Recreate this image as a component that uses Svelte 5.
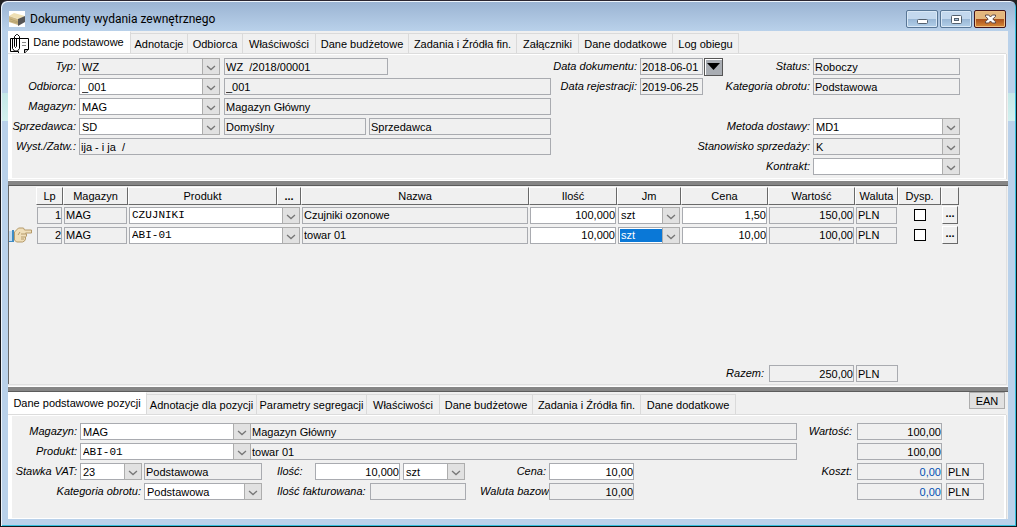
<script lang="ts">
	const mainTabs = [
		{ name: 'Dane podstawowe', width: 123 },
		{ name: 'Adnotacje', width: 57 },
		{ name: 'Odbiorca', width: 55 },
		{ name: 'Właściwości', width: 73 },
		{ name: 'Dane budżetowe', width: 93 },
		{ name: 'Zadania i Źródła fin.', width: 108 },
		{ name: 'Załączniki', width: 62 },
		{ name: 'Dane dodatkowe', width: 94 },
		{ name: 'Log obiegu', width: 66 },
	];

	const itemTabs = [
		{ name: 'Dane podstawowe pozycji', width: 139 },
		{ name: 'Adnotacje dla pozycji', width: 110 },
		{ name: 'Parametry segregacji', width: 110 },
		{ name: 'Właściwości', width: 73 },
		{ name: 'Dane budżetowe', width: 93 },
		{ name: 'Zadania i Źródła fin.', width: 108 },
		{ name: 'Dane dodatkowe', width: 95 },
	];

	const items = [
		{ lp: 1, store: 'MAG', product: 'CZUJNIKI', name: 'Czujniki ozonowe', qty: '100,000', unit: 'szt', price: '1,50', value: '150,00', currency: 'PLN' },
		{ lp: 2, store: 'MAG', product: 'ABI-01', name: 'towar 01', qty: '10,000', unit: 'szt', price: '10,00', value: '100,00', currency: 'PLN' },
	];

	let mainTab = $state(0);
	let itemTab = $state(0);
	let current = $state(1);
</script>

{#snippet combo(id, value, cls = '', label = undefined)}
	<span class="combo {cls}">
		<select {id} aria-label={label}><option>{value}</option></select>
		<svg class="arrow" viewBox="0 0 17 17" aria-hidden="true"><path d="M4 8l4.500 4 4.500-4" /></svg>
	</span>
{/snippet}

{#snippet ro(id, value, cls = '', label = undefined)}
	<input class="field ro {cls}" {id} {value} aria-label={label} readonly />
{/snippet}

<div class="window">
	<header class="titlebar">
		<svg class="app-icon" viewBox="0 0 16 16" aria-hidden="true">
			<rect width="16" height="16" fill="#fff" />
			<path d="M0 5l5-3 11 3-6 3z" fill="#eedfb4" />
			<path d="M0 5l9 3v6l-9-3z" fill="#cdb886" />
			<path d="M9 8l7-3v6l-7 4z" fill="#555" />
			<path d="M1 8l8 3M1 10l8 2" stroke="#ae9967" stroke-width=".7" fill="none" />
		</svg>
		<h1>Dokumenty wydania zewnętrznego</h1>
		<div class="controls">
			<button aria-label="Minimalizuj">
				<svg viewBox="0 0 28 14"><rect x="9.500" y="7.500" width="10" height="4" rx="1" fill="#fff" stroke="#53606e" /></svg>
			</button>
			<button aria-label="Maksymalizuj">
				<svg viewBox="0 0 28 14"><rect x="9.500" y="3.500" width="10" height="8" rx="1" fill="#fff" stroke="#53606e" /><rect x="12.500" y="6.500" width="4" height="2" fill="#a9c2dc" stroke="#53606e" /></svg>
			</button>
			<button class="close" aria-label="Zamknij">
				<svg viewBox="0 0 28 14"><path d="M9.500 3h3.200l1.800 2 1.800-2h3.200v1.500L16.800 7l2.700 2.700V11h-3.200l-1.800-2-1.800 2H9.500V9.700L12.200 7 9.500 4.500z" fill="#fff" stroke="#5c4848" /></svg>
			</button>
		</div>
	</header>

	<main>
		<div class="tabs" role="tablist">
			{#each mainTabs as tab, i}
				<button role="tab" class="tab" class:active={mainTab === i} aria-selected={mainTab === i} style="width: {tab.width}px" onclick={() => mainTab = i}>
					{#if i === 0}
						<svg class="clip" viewBox="0 0 22 22" aria-hidden="true">
							<path d="M1.500 5.500h18v11l-4 4h-6v-2h-8z" fill="#fff" stroke="#000" />
							<path d="M19.500 16.500h-4v4" fill="#bbb" stroke="#000" />
							<path d="M13 9.500h4M13 12.500h4" fill="none" stroke="#888" />
							<path d="M7.500 6v7.500l-1 1-1-1v-10l2-2h1l2 2v12l-2 2.500h-3l-2-2.500V6" fill="none" stroke="#000" />
						</svg>
					{/if}
					<span>{tab.name}</span>
				</button>
			{/each}
		</div>

		<section class="pane document">
			<div class="col grow">
				<div class="row">
					<label class="l-main" for="typ">Typ:</label>
					{@render combo('typ', 'WZ', 'w-combo ro')}
					{@render ro('numer', 'WZ  /2018/00001', 'w-number', 'Numer')}
				</div>
				<div class="row">
					<label class="l-main" for="odbiorca">Odbiorca:</label>
					{@render combo('odbiorca', '_001', 'w-combo')}
					{@render ro('odbiorca-nazwa', '_001', 'grow', 'Nazwa odbiorcy')}
				</div>
				<div class="row">
					<label class="l-main" for="magazyn">Magazyn:</label>
					{@render combo('magazyn', 'MAG', 'w-combo')}
					{@render ro('magazyn-nazwa', 'Magazyn Główny', 'grow', 'Nazwa magazynu')}
				</div>
				<div class="row">
					<label class="l-main" for="sprzedawca">Sprzedawca:</label>
					{@render combo('sprzedawca', 'SD', 'w-combo')}
					{@render ro('sprzedawca-imie', 'Domyślny', 'w-first', 'Imię')}
					{@render ro('sprzedawca-nazwisko', 'Sprzedawca', 'grow', 'Nazwisko')}
				</div>
				<div class="row">
					<label class="l-main" for="wyst">Wyst./Zatw.:</label>
					{@render ro('wyst', 'ija - i ja  /', 'grow')}
				</div>
			</div>

			<div class="col dates">
				<div class="row">
					<label class="grow" for="data-dok">Data dokumentu:</label>
					{@render ro('data-dok', '2018-06-01', 'w-date')}
					<button class="calendar" aria-label="Wybierz datę"><svg viewBox="0 0 17 16"><path d="M2 4h13l-6.500 7z" /></svg></button>
				</div>
				<div class="row">
					<label class="grow" for="data-rej">Data rejestracji:</label>
					{@render ro('data-rej', '2019-06-25', 'w-date')}
					<span class="calendar-gap"></span>
				</div>
			</div>

			<div class="col state">
				<div class="row">
					<label class="grow" for="status">Status:</label>
					{@render ro('status', 'Roboczy', 'w-state')}
				</div>
				<div class="row">
					<label class="grow" for="kategoria">Kategoria obrotu:</label>
					{@render ro('kategoria', 'Podstawowa', 'w-state')}
				</div>
				<div class="row spaced">
					<label class="grow" for="metoda">Metoda dostawy:</label>
					{@render combo('metoda', 'MD1', 'w-state')}
				</div>
				<div class="row">
					<label class="grow" for="stanowisko">Stanowisko sprzedaży:</label>
					{@render combo('stanowisko', 'K', 'w-state ro')}
				</div>
				<div class="row">
					<label class="grow" for="kontrakt">Kontrakt:</label>
					{@render combo('kontrakt', '', 'w-state')}
				</div>
			</div>
		</section>

		<div class="splitter"></div>

		<section class="items">
			<table>
				<colgroup>
					<col style="width: 28px" />
					<col style="width: 27px" />
					<col style="width: 65px" />
					<col style="width: 149px" />
					<col style="width: 24px" />
					<col />
					<col style="width: 88px" />
					<col style="width: 64px" />
					<col style="width: 87px" />
					<col style="width: 87px" />
					<col style="width: 43px" />
					<col style="width: 43px" />
					<col style="width: 18px" />
				</colgroup>
				<thead>
					<tr>
						<td></td>
						<th>Lp</th>
						<th>Magazyn</th>
						<th>Produkt</th>
						<th><b>...</b></th>
						<th>Nazwa</th>
						<th>Ilość</th>
						<th>Jm</th>
						<th>Cena</th>
						<th>Wartość</th>
						<th>Waluta</th>
						<th>Dysp.</th>
						<th aria-label="Szczegóły"></th>
					</tr>
				</thead>
				<tbody>
					{#each items as item, i}
						<tr onfocusin={() => current = i}>
							<td class="marker">
								{#if current === i}
									<svg viewBox="0 0 24 18" aria-label="Bieżąca pozycja">
										<path d="M0 5h3v10H0z" fill="#c4dcf0" />
										<path d="M3 4h2v12H0v-1h3z" fill="#3f8cc4" />
										<path d="M5.500 6l4-4h5l1 2h7v3h-6l1 1v2l-1 1v2l-1 2-2 1h-6l-2-2z" fill="#f0dfba" stroke="#b59a6a" />
										<path d="M11 6l-2 3M12 8h5M12 11h4M12 13h3" fill="none" stroke="#b59a6a" />
									</svg>
								{/if}
							</td>
							<td>{@render ro(undefined, item.lp, 'num', 'Lp')}</td>
							<td>{@render ro(undefined, item.store, '', 'Magazyn')}</td>
							<td colspan="2">{@render combo(undefined, item.product, 'mono', 'Produkt')}</td>
							<td>{@render ro(undefined, item.name, '', 'Nazwa')}</td>
							<td><input class="field num" value={item.qty} aria-label="Ilość" /></td>
							<td>{@render combo(undefined, item.unit, current === i ? 'selected' : '', 'Jm')}</td>
							<td><input class="field num" value={item.price} aria-label="Cena" /></td>
							<td>{@render ro(undefined, item.value, 'num', 'Wartość')}</td>
							<td>{@render ro(undefined, item.currency, '', 'Waluta')}</td>
							<td class="center"><input type="checkbox" aria-label="Dysp." /></td>
							<td><button class="more" aria-label="Szczegóły">...</button></td>
						</tr>
					{/each}
				</tbody>
			</table>
			<div class="total">
				<label for="razem">Razem:</label>
				{@render ro('razem', '250,00', 'num w-amount')}
				{@render ro('razem-waluta', 'PLN', 'w-currency', 'Waluta')}
			</div>
		</section>

		<div class="splitter"></div>

		<div class="tabs" role="tablist">
			{#each itemTabs as tab, i}
				<button role="tab" class="tab" class:active={itemTab === i} aria-selected={itemTab === i} style="width: {tab.width}px" onclick={() => itemTab = i}>
					<span>{tab.name}</span>
				</button>
			{/each}
			<button class="ean">EAN</button>
		</div>

		<section class="pane details">
			<div class="col grow">
				<div class="row">
					<label class="l-item" for="p-magazyn">Magazyn:</label>
					{@render combo('p-magazyn', 'MAG', 'w-item')}
					{@render ro('p-magazyn-nazwa', 'Magazyn Główny', 'grow joined', 'Nazwa magazynu')}
				</div>
				<div class="row">
					<label class="l-item" for="p-produkt">Produkt:</label>
					{@render combo('p-produkt', 'ABI-01', 'w-item mono')}
					{@render ro('p-produkt-nazwa', 'towar 01', 'grow joined', 'Nazwa produktu')}
				</div>
				<div class="row">
					<label class="l-item" for="vat">Stawka VAT:</label>
					{@render combo('vat', '23', 'w-short')}
					{@render ro('vat-nazwa', 'Podstawowa', 'w-vat', 'Nazwa stawki')}
					<label class="l-qty" for="p-ilosc">Ilość:</label>
					<input class="field num w-amount" id="p-ilosc" value="10,000" />
					{@render combo('p-jm', 'szt', 'w-short', 'Jm')}
					<label class="l-price" for="p-cena">Cena:</label>
					<input class="field num w-amount" id="p-cena" value="10,00" />
				</div>
				<div class="row">
					<label class="l-category" for="p-kategoria">Kategoria obrotu:</label>
					{@render combo('p-kategoria', 'Podstawowa', 'w-vat')}
					<label class="l-invoiced" for="fakturowana">Ilość fakturowana:</label>
					{@render ro('fakturowana', '', 'w-invoiced')}
					<label class="l-base" for="bazowa">Waluta bazow</label>
					{@render ro('bazowa', '10,00', 'num w-amount')}
				</div>
			</div>

			<div class="col sums">
				<div class="row">
					<label class="grow" for="p-wartosc">Wartość:</label>
					{@render ro('p-wartosc', '100,00', 'num w-amount')}
					<span class="w-pln"></span>
				</div>
				<div class="row">
					{@render ro('p-wartosc2', '100,00', 'num w-amount', 'Wartość')}
					<span class="w-pln"></span>
				</div>
				<div class="row">
					<label class="grow" for="koszt">Koszt:</label>
					{@render ro('koszt', '0,00', 'num blue w-amount')}
					{@render ro('koszt-waluta', 'PLN', 'w-pln', 'Waluta')}
				</div>
				<div class="row">
					{@render ro('koszt2', '0,00', 'num blue w-amount', 'Koszt')}
					{@render ro('koszt2-waluta', 'PLN', 'w-pln', 'Waluta')}
				</div>
			</div>
		</section>
	</main>
</div>

<style>
	:global(body) { margin: 0; background: #222; }
	* { box-sizing: border-box; }

	.window {
		display: flex; flex-direction: column;
		min-height: 100vh; padding: 1px 8px 7px 7px;
		border: 1px solid #16161a; border-top-color: #2b2630;
		border-radius: 7px 7px 0 0;
		background: linear-gradient(#9ab3d2 0, #b9d1ea 30px, #b9d1ea 92px, #c4e8e8 92px, #d2f0ee 120px, #b9d1ea 120px);
		box-shadow: inset 1px 1px #eef4fb, inset -1px -1px #35bfdd;
		font-family: "Liberation Sans", Arial, sans-serif; font-size: 11px; color: #000;
	}
	button, input, select { font: inherit; color: inherit; margin: 0; border-radius: 0; }

	.titlebar { display: flex; align-items: center; height: 29px; padding: 5px 2px 0 1px; }
	.app-icon { width: 16px; height: 16px; margin-right: 5px; }
	h1 { flex: 1; margin: 0; font: 12px Roboto, "Open Sans", sans-serif; }
	.controls { display: flex; gap: 2px; }
	.controls button {
		width: 32px; height: 18px; padding: 0;
		border: 1px solid #587696; border-radius: 2px;
		background: linear-gradient(#c3d8ee 50%, #98b6d5 50%, #b2cfe9);
		box-shadow: inset 0 0 0 1px #d9e8f6;
	}
	.controls svg { display: block; width: 28px; height: 14px; margin: auto; }
	.controls .close {
		border-color: #43131a;
		background: linear-gradient(#e4b77e 50%, #a84d1a 50%, #d98a38);
		box-shadow: inset 0 0 0 1px #eebf83;
	}

	main { flex: 1; display: flex; flex-direction: column; background: #f0f0f0; }

	.tabs { display: flex; height: 23px; padding-top: 2px; }
	.tab {
		display: flex; align-items: center; justify-content: center; gap: 2px;
		height: 21px; padding: 0;
		border: solid #dadada; border-width: 1px 1px 0 0;
		background: #f0f0f0; white-space: nowrap;
	}
	.tab.active { height: 23px; margin-top: -2px; padding-bottom: 2px; border-top-color: #fff; background: #fff; }
	.tab:has(.clip) { padding-right: 5px; }
	.clip { width: 22px; height: 22px; margin: 2px 0 -2px; }
	.ean {
		width: 36px; height: 17px; margin: -2px 3px 0 auto; padding: 0;
		border: 1px solid #adadad; background: #e1e1e1;
	}

	.pane {
		display: flex;
		margin-right: 2px;
		border: 1px solid #fff; border-width: 1px 2px 1px 4px;
		box-shadow: 0 -1px #dcdcdc, 1px 0 #dcdcdc;
	}
	.document { padding: 3px 44px 0 0; }
	.details { padding: 7px 20px 15px 0; }
	.col { display: flex; flex-direction: column; min-width: 0; }
	.grow { flex: 1; min-width: 0; }
	.row { display: flex; align-items: flex-start; height: 20px; }
	.row.spaced { margin-top: 20px; }
	/* long labels run out to the left of their column */
	label {
		display: flex; justify-content: flex-end;
		padding-right: 3px;
		font-style: italic; line-height: 17px; white-space: nowrap;
	}

	.field {
		display: block; width: 100%; height: 17px; padding: 0 1px;
		border: 1px solid #a9abb0; background: #fff;
	}
	.field.grow { width: auto; }
	.field.ro { background: #f0f0f0; }
	.num { text-align: right; }
	.field.num { padding: 0; }
	.blue { color: #0050b4; }

	.combo { position: relative; display: block; height: 17px; }
	.combo select {
		appearance: none; display: block;
		width: 100%; height: 17px; padding: 0 18px 0 2px;
		border: 1px solid #a9abb0; background: #fff;
	}
	.combo.ro select { background: #f0f0f0; }
	.combo.mono select { font: 11px "Liberation Mono", monospace; }
	.combo.selected select {
		color: #fff; background: #0a78d7;
		box-shadow: inset 0 0 0 1px #fff;
		outline: 1px dotted #fff; outline-offset: -2px;
	}
	.arrow {
		position: absolute; right: 0; top: 0;
		width: 18px; height: 17px;
		border: 1px solid #adadad; background: #e1e1e1;
		pointer-events: none;
	}
	.arrow path { fill: none; stroke: #777; stroke-width: 1.5; }

	.l-main { width: 67px; }
	.w-combo { width: 141px; margin-right: 4px; }
	.w-number { width: 164px; }
	.w-first { width: 142px; margin-right: 3px; }
	.dates { width: 172px; }
	.w-date { width: 63px; }
	.calendar {
		width: 19px; height: 18px; margin-left: 1px; padding: 0;
		border: 1px solid #555; background: #a9adb3;
		box-shadow: inset 1px 1px #fff;
	}
	.calendar svg { display: block; width: 17px; height: 16px; }
	.calendar-gap { width: 20px; }
	.state { width: 237px; }
	.w-state { width: 147px; flex: none; }

	.splitter {
		height: 6px; margin-top: 1px;
		border: solid #fff; border-width: 1px 0 0;
		background: linear-gradient(#868686 4px, #5c5c5c 4px);
	}

	.items {
		flex: 1; display: flex; flex-direction: column; justify-content: space-between;
		margin-right: 1px; padding: 1px 47px 0 0;
		border: solid #e0e0e0; border-width: 0 1px 1px 0;
		box-shadow: inset 1px 0 #696969;
	}
	table { width: 100%; table-layout: fixed; border-collapse: separate; border-spacing: 0; }
	th {
		height: 18px; padding: 0;
		font-weight: normal; line-height: 15px;
		border: 1px solid #fff;
		border-right-color: #696969; border-bottom-color: #696969;
	}
	td { height: 20px; padding: 0 1px; }
	thead td { height: 18px; padding: 0; }
	.marker { padding: 0 0 0 1px; }
	.marker svg { display: block; width: 24px; height: 18px; }
	.center { text-align: center; }
	input[type='checkbox'] {
		appearance: none; display: block;
		width: 12px; height: 12px; margin: auto;
		border: 1px solid #000; background: #fff;
	}
	input[type='checkbox']:checked { background: #000; box-shadow: inset 0 0 0 2px #fff; }
	.more {
		display: block; width: 16px; height: 18px; padding: 0 0 4px;
		border: 1px solid #fff; border-right-color: #696969; border-bottom-color: #696969;
		background: #f0f0f0; font-weight: bold; line-height: 12px;
	}
	.total { display: flex; justify-content: flex-end; gap: 2px; padding: 0 61px 2px 0; }

	.w-amount { width: 85px; flex: none; }
	.w-currency { width: 42px; }
	.l-item { width: 68px; }
	.w-item { width: 171px; }
	.joined { border-left: 0; }
	.w-short { width: 62px; }
	.w-vat { width: 118px; flex: none; }
	.w-short + .w-vat { margin-left: 2px; }
	.w-amount + .w-short { margin-left: 3px; }
	.l-qty { width: 53px; padding-left: 15px; justify-content: flex-start; }
	.l-price { width: 84px; }
	.l-category { width: 132px; }
	.l-invoiced { width: 108px; padding-left: 15px; justify-content: flex-start; }
	.w-invoiced { width: 96px; }
	.l-base { width: 83px; padding-right: 0; }
	.sums { width: 187px; }
	.sums .row { justify-content: flex-end; }
	.sums label { padding-right: 5px; }
	.w-pln { width: 38px; margin-left: 4px; flex: none; }
</style>
